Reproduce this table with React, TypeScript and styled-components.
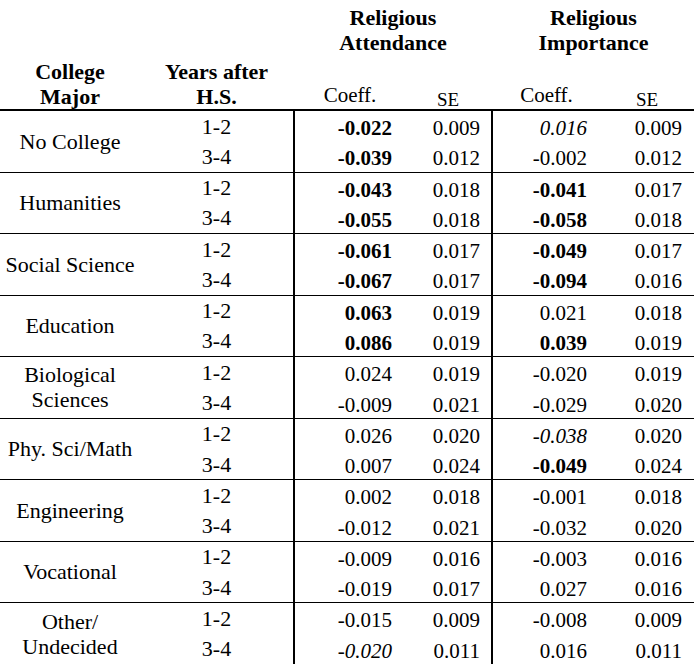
import React from 'react';
import styled, {createGlobalStyle} from "styled-components";

type Cell = string;
type Group = { label: string[]; rows: [Cell, Cell, Cell, Cell][] };

// "*" prefix = bold (significant), "/" prefix = italic (marginal)
const groups: Group[] = [
    {label: ["No College"], rows: [["*-0.022", "0.009", "/0.016", "0.009"], ["*-0.039", "0.012", "-0.002", "0.012"]]},
    {label: ["Humanities"], rows: [["*-0.043", "0.018", "*-0.041", "0.017"], ["*-0.055", "0.018", "*-0.058", "0.018"]]},
    {label: ["Social Science"], rows: [["*-0.061", "0.017", "*-0.049", "0.017"], ["*-0.067", "0.017", "*-0.094", "0.016"]]},
    {label: ["Education"], rows: [["*0.063", "0.019", "0.021", "0.018"], ["*0.086", "0.019", "*0.039", "0.019"]]},
    {label: ["Biological", "Sciences"], rows: [["0.024", "0.019", "-0.020", "0.019"], ["-0.009", "0.021", "-0.029", "0.020"]]},
    {label: ["Phy. Sci/Math"], rows: [["0.026", "0.020", "/-0.038", "0.020"], ["0.007", "0.024", "*-0.049", "0.024"]]},
    {label: ["Engineering"], rows: [["0.002", "0.018", "-0.001", "0.018"], ["-0.012", "0.021", "-0.032", "0.020"]]},
    {label: ["Vocational"], rows: [["-0.009", "0.016", "-0.003", "0.016"], ["-0.019", "0.017", "0.027", "0.016"]]},
    {label: ["Other/", "Undecided"], rows: [["-0.015", "0.009", "-0.008", "0.009"], ["/-0.020", "0.011", "0.016", "0.011"]]},
];

const cols = {
    label: 140,
    years: 153,
    att: {coeff: 110, se: 86, coeffPad: 13, sePad: 11},
    imp: {coeff: 107, se: 94, coeffPad: 13, sePad: 12},
};

const ROW_H = 30.28;

const Num = ({value, w, pad}: { value: string; w: number; pad: number }) => {
    const bold = value.startsWith("*");
    const italic = value.startsWith("/");
    return (
        <NumCell $w={w} $pad={pad} $bold={bold} $italic={italic}>
            {bold || italic ? value.slice(1) : value}
        </NumCell>
    );
};

export default function App() {
    return (
        <>
            <GlobalStyle/>
            <Table>
                <HeaderRow>
                    <HeadCell $w={cols.label}><div>College<br/>Major</div></HeadCell>
                    <HeadCell $w={cols.years}><div>Years after<br/>H.S.</div></HeadCell>
                    {[{title: "Attendance", c: cols.att}, {title: "Importance", c: cols.imp}].map(m => (
                        <MeasureHead key={m.title}>
                            <MeasureTitle>Religious<br/>{m.title}</MeasureTitle>
                            <SubHeads>
                                <SubHead $w={m.c.coeff}>Coeff.</SubHead>
                                <SubHead $w={m.c.se} $small>SE</SubHead>
                            </SubHeads>
                        </MeasureHead>
                    ))}
                </HeaderRow>
                {groups.map((g, gi) => (
                    <GroupRow key={g.label.join(" ")} $first={gi === 0}>
                        <Label>
                            <div>
                                {g.label.map((l, i) => <React.Fragment key={i}>{i > 0 && <br/>}{l}</React.Fragment>)}
                            </div>
                        </Label>
                        <YearsCol>
                            <YearCell>1-2</YearCell>
                            <YearCell>3-4</YearCell>
                        </YearsCol>
                        <Block>
                            {g.rows.map((r, ri) => (
                                <DataRow key={ri}>
                                    <Num value={r[0]} w={cols.att.coeff} pad={cols.att.coeffPad}/>
                                    <Num value={r[1]} w={cols.att.se} pad={cols.att.sePad}/>
                                </DataRow>
                            ))}
                        </Block>
                        <Block>
                            {g.rows.map((r, ri) => (
                                <DataRow key={ri}>
                                    <Num value={r[2]} w={cols.imp.coeff} pad={cols.imp.coeffPad}/>
                                    <Num value={r[3]} w={cols.imp.se} pad={cols.imp.sePad}/>
                                </DataRow>
                            ))}
                        </Block>
                    </GroupRow>
                ))}
            </Table>
        </>
    );
}

const serif = `"Liberation Serif", "Times New Roman", serif`;

const GlobalStyle = createGlobalStyle`
  body {
    margin: 0;
    background: #fff;
    color: #000;
    font-family: ${serif};
  }
`
const Table = styled.div`
  width: 694px;
  font-family: ${serif};
  font-size: 22px;
  line-height: 25px;
`
const HeaderRow = styled.div`
  display: flex;
  height: 109px;
  border-bottom: 2px solid #000;
`
const HeadCell = styled.div<{ $w: number }>`
  width: ${p => p.$w}px;
  display: flex;
  align-items: flex-end;
  justify-content: center;
  text-align: center;
  font-weight: 700;
`
const MeasureHead = styled.div`
  display: flex;
  flex-direction: column;
  justify-content: space-between;
  padding-left: 2px;
`
const MeasureTitle = styled.div`
  padding-top: 5px;
  font-weight: 700;
  text-align: center;
`
const SubHeads = styled.div`
  display: flex;
  align-items: flex-end;
`
const SubHead = styled.div<{ $w: number; $small?: boolean }>`
  width: ${p => p.$w}px;
  text-align: center;
  font-size: ${p => p.$small ? "19px" : "21px"};
  line-height: ${p => p.$small ? "18px" : "25px"};
  padding-bottom: ${p => p.$small ? "0" : "1px"};
`
const GroupRow = styled.div<{ $first: boolean }>`
  display: flex;
  border-top: ${p => p.$first ? "none" : "1px solid #000"};
`
const Label = styled.div`
  width: ${cols.label}px;
  display: flex;
  align-items: center;
  justify-content: center;
  text-align: center;
`
const YearsCol = styled.div`
  width: ${cols.years}px;
  display: flex;
  flex-direction: column;
`
const YearCell = styled.div`
  height: ${ROW_H}px;
  display: flex;
  align-items: center;
  justify-content: center;
`
const Block = styled.div`
  border-left: 2px solid #000;
  display: flex;
  flex-direction: column;
`
const DataRow = styled.div`
  height: ${ROW_H}px;
  display: flex;
`
const NumCell = styled.div<{ $w: number; $pad: number; $bold: boolean; $italic: boolean }>`
  width: ${p => p.$w}px;
  box-sizing: border-box;
  padding: 5px ${p => p.$pad}px 0 0;
  display: flex;
  align-items: center;
  justify-content: flex-end;
  font-size: 21px;
  font-weight: ${p => p.$bold ? 700 : 400};
  font-style: ${p => p.$italic ? "italic" : "normal"};
`
